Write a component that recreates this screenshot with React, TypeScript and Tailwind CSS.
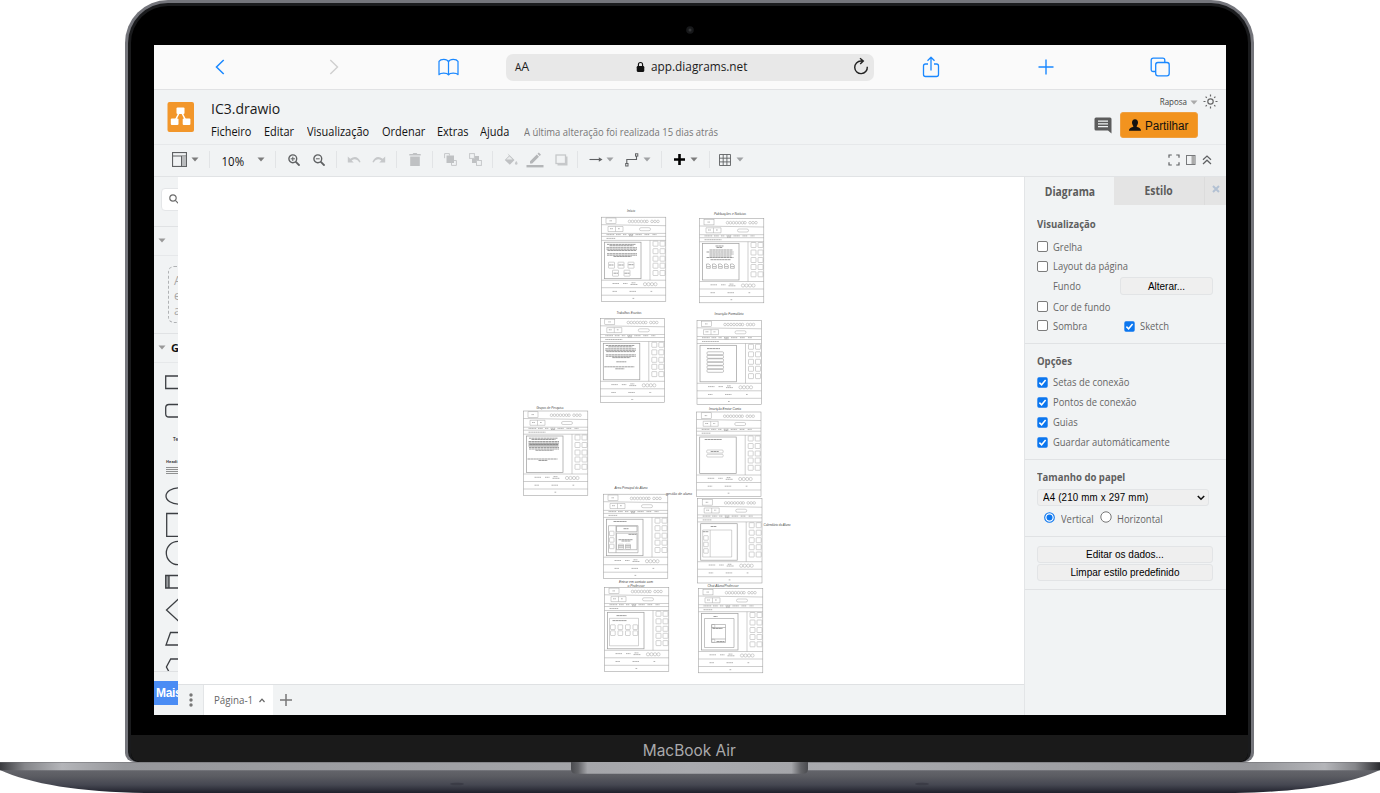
import React from 'react';

type Kids = { children?: React.ReactNode; className?: string };

const Caret = ({ className = 'w-[10px]', color = '#7c7c7c' }: { className?: string; color?: string }) => (
  <span className={'flex shrink-0 justify-center ' + className}>
    <svg width="8" height="5" viewBox="0 0 8 5"><path d="M.5.5h7L4 4.5z" fill={color} /></svg>
  </span>
);

const Sep = () => <span className="h-[17px] w-px shrink-0 bg-[#e2e4e6]" />;

const Cell = ({ children, className = '' }: Kids) => (
  <span className={'flex h-full shrink-0 items-center justify-center ' + className}>{children}</span>
);

function SafariBar() {
  const blue = '#1a88ff';
  return (
    <div className="flex h-[45px] shrink-0 items-center border-b border-[#e1e2e4] bg-[#fafafa] pl-[9px]">
      <Cell className="w-[114px]">
        <svg width="10" height="16" viewBox="0 0 10 16" fill="none" stroke={blue} strokeWidth="1.5"><path d="M8.700 1 1.500 8l7.200 7" /></svg>
      </Cell>
      <Cell className="w-[114px]">
        <svg width="10" height="16" viewBox="0 0 10 16" fill="none" stroke="#cfcfcf" strokeWidth="1.4"><path d="m1.300 1 7.200 7-7.200 7" /></svg>
      </Cell>
      <Cell className="w-[114px] pl-[1px]">
        <svg width="21" height="19" viewBox="0 0 22 20" fill="none" stroke={blue} strokeWidth="1.3">
          <path d="M11 4C10 2 8.200 1.500 6 1.500S2 2 1 3.500v14c1-1.200 3-1.500 5-1.500s4 .3 5 1.800c1-1.500 3-1.800 5-1.800s4 .3 5 1.500v-14c-1-1.500-2.800-2-5-2S12 2 11 4zM11 4v13.800" strokeLinejoin="round" />
        </svg>
      </Cell>
      <div className="ml-[1px] flex h-[27px] w-[368px] shrink-0 items-center rounded-[7px] bg-[#e8e8e8] pl-[7px] pr-[5px]">
        <span className="flex w-[26px] items-baseline pl-[2px] font-['Open_Sans',sans-serif] text-[#1c1c1c]">
          <span className="text-[10px]">A</span><span className="text-[12.5px]">A</span>
        </span>
        <span className="flex flex-1 items-center pl-[97px]">
          <svg width="9" height="12" viewBox="0 0 10 12"><rect x=".8" y="5" width="8.400" height="6.500" rx="1.200" fill="#111" /><path d="M2.700 5.500V3.300a2.300 2.300 0 0 1 4.600 0v2.200" fill="none" stroke="#111" strokeWidth="1.300" /></svg>
          <span className="ml-[6px] origin-left scale-x-[0.945] whitespace-nowrap pt-[1px] font-['Open_Sans',sans-serif] text-[12.5px] text-[#1c1c1c]">app.diagrams.net</span>
        </span>
        <svg className="mb-[2px]" width="16" height="18" viewBox="0 0 16 18" fill="none" stroke="#222" strokeWidth="1.4"><path d="M14.300 9.800A6.300 6.300 0 1 1 8 4h2.300M7 1.200 10.300 4 7.200 7" /></svg>
      </div>
      <Cell className="w-[114px]">
        <svg width="18" height="22" viewBox="0 0 18 22" fill="none" stroke={blue} strokeWidth="1.3" strokeLinejoin="round"><path d="M6 8H3.500Q1.500 8 1.500 10v8.500q0 2 2 2h11q2 0 2-2V10q0-2-2-2H12M9 14.500V1.500M5.500 4.700 9 1.300l3.500 3.400" /></svg>
      </Cell>
      <Cell className="w-[115px]">
        <svg width="16" height="16" viewBox="0 0 16 16" stroke={blue} strokeWidth="1.4"><path d="M8 .5v15M.5 8h15" /></svg>
      </Cell>
      <Cell className="w-[114px]">
        <svg width="20" height="20" viewBox="0 0 20 20" fill="none" stroke={blue} strokeWidth="1.3"><rect x="5.700" y="5.500" width="13.500" height="13.300" rx="2.200" /><path d="M5.500 14.500H3.200q-2 0-2-2V3.200q0-2 2-2h9.600q2 0 2 2v2" /></svg>
      </Cell>
    </div>
  );
}

const MenuItem = ({ children, className = '' }: Kids) => (
  <span className={'shrink-0 whitespace-nowrap ' + className}>
    <span className="inline-block origin-left scale-x-[0.915]">{children}</span>
  </span>
);

function Header() {
  return (
    <div className="flex h-[55px] shrink-0 border-b border-[#e6e8ea] bg-[#f1f3f4] font-['Open_Sans',sans-serif]">
      <svg className="ml-[13px] mt-[12px] shrink-0" width="27" height="30" viewBox="0 0 27 30">
        <rect x=".5" width="26.500" height="30" rx="2" fill="#f2962a" />
        <path d="M13.500 8 7.500 20M13.500 8l6 12" stroke="#fff" strokeWidth="1.600" />
        <g fill="#fff"><rect x="9.500" y="5.500" width="8" height="6.500" rx="1" /><rect x="3.800" y="16.500" width="7.700" height="6.500" rx="1" /><rect x="15.700" y="16.500" width="7.700" height="6.500" rx="1" /></g>
      </svg>
      <div className="ml-[17px] flex w-[640px] shrink-0 flex-col">
        <div className="mt-[9px] h-[20px] origin-left scale-x-[0.965] whitespace-nowrap text-[14.5px] leading-[20px] text-[#1a1a1a]">IC3.drawio</div>
        <div className="mt-[3px] flex h-[20px] items-center text-[12px] leading-[20px] text-[#111]">
          <MenuItem className="w-[53px]">Ficheiro</MenuItem>
          <MenuItem className="w-[43px]">Editar</MenuItem>
          <MenuItem className="w-[75px]">Visualização</MenuItem>
          <MenuItem className="w-[55px]">Ordenar</MenuItem>
          <MenuItem className="w-[43px]">Extras</MenuItem>
          <MenuItem className="w-[44px]">Ajuda</MenuItem>
          <span className="origin-left scale-x-[0.945] whitespace-nowrap text-[10px] text-[#777]">A última alteração foi realizada 15 dias atrás</span>
        </div>
      </div>
      <div className="flex flex-1 flex-col items-end">
        <div className="mt-[4px] flex h-[16px] items-center pr-[8px]">
          <span className="origin-right scale-x-[0.94] text-[8.5px] text-[#444]">Raposa</span>
          <Caret className="ml-[2px] w-[10px]" color="#aaa" />
          <svg className="mb-[1px] ml-[4px]" width="15" height="15" viewBox="0 0 15 15" fill="none" stroke="#666" strokeWidth="1.200"><circle cx="7.500" cy="7.500" r="2.700" /><path d="M7.500.5v2M7.500 12.500v2M.5 7.500h2M12.500 7.500h2M2.600 2.600 3.800 3.800M11.200 11.200l1.200 1.200M2.600 12.400l1.200-1.200M11.200 3.800l1.200-1.200" /></svg>
        </div>
        <div className="mt-[2px] flex items-center pr-[28px]">
          <svg className="mr-[8px]" width="18" height="17" viewBox="0 0 18 17"><path d="M2 .5h14q1.500 0 1.500 1.500v14.500L14 13.500H2Q.5 13.500.5 12V2Q.5.500 2 .5z" fill="#5c5c5c" /><path d="M4 4.200h10M4 6.900h10M4 9.600h10" stroke="#f1f3f4" strokeWidth="1.300" /></svg>
          <div className="flex h-[26px] w-[78px] items-center rounded-[3px] border border-[#f0a040] bg-[#f2931e] pl-[8px]">
            <svg width="12" height="12" viewBox="0 0 12 12"><path d="M6 .3C8 .3 9 1.700 9 3.500S8 6.600 7.500 7.300c0 1 4.500 1 4.500 4.400H0C0 8.300 4.500 8.300 4.500 7.300 4 6.600 3 5.300 3 3.500S4 .3 6 .3z" fill="#111" /></svg>
            <span className="ml-[4px] origin-left scale-x-[0.97] whitespace-nowrap pt-[1px] font-['Liberation_Sans',sans-serif] text-[12px] text-[#111]">Partilhar</span>
          </div>
        </div>
      </div>
    </div>
  );
}

function Toolbar() {
  const g = '#5f6163';
  const d = '#c6c8ca';
  return (
    <div className="flex h-[32px] shrink-0 items-center border-b border-[#e1e3e5] bg-[#f1f3f4] pb-[2px] pl-[16px]">
      <Cell className="w-[19px]">
        <svg width="15" height="15" viewBox="0 0 15 15" fill="none" stroke={g}><rect x=".5" y=".5" width="14" height="14" strokeWidth="1.2" /><path d="M.5 4h14M9.500 4v10.500" /><rect x="10" y="4.500" width="4" height="9.500" fill="#b9bbbd" stroke="none" /></svg>
      </Cell>
      <Caret className="w-[12px]" /><span className="w-[8px]" /><Sep />
      <Cell className="w-[46px]"><span className="inline-block scale-x-[0.95] pt-[4px] font-['Open_Sans',sans-serif] text-[12px] text-[#111]">10%</span></Cell>
      <Caret className="w-[10px]" /><span className="w-[9px]" /><Sep />
      <Cell className="ml-[6px] w-[24px]">
        <svg width="12" height="12" viewBox="0 0 12 12" fill="none" stroke={g} strokeWidth="1.400"><circle cx="4.800" cy="4.800" r="3.900" /><path d="m7.600 7.600 4 4" strokeWidth="1.900" /><path d="M4.800 2.700V7M2.700 4.800H7" strokeWidth="1" /></svg>
      </Cell>
      <Cell className="w-[25px]">
        <svg width="12" height="12" viewBox="0 0 12 12" fill="none" stroke={g} strokeWidth="1.400"><circle cx="4.800" cy="4.800" r="3.900" /><path d="m7.600 7.600 4 4" strokeWidth="1.900" /><path d="M2.900 4.800h3.800" strokeWidth="1" /></svg>
      </Cell>
      <span className="w-[5px]" /><Sep />
      <Cell className="ml-[4px] w-[25px]">
        <svg width="14" height="8" viewBox="0 0 14 8"><path d="M.8.500v6h6L4.600 4.500Q9 1 12.500 6.500L13.600 6Q10 -1.800 3.200 2.800z" fill={d} /></svg>
      </Cell>
      <Cell className="w-[26px]">
        <svg width="14" height="8" viewBox="0 0 14 8"><path d="M13.200.5v6h-6l2.200-2Q5 1 1.500 6.500L.4 6Q4-1.800 10.800 2.800z" fill={d} /></svg>
      </Cell>
      <span className="w-[4px]" /><Sep />
      <Cell className="w-[35px]">
        <svg width="12" height="13" viewBox="0 0 12 13" fill="#bfc1c3"><path d="M.3.900h3.300L4.400 0h3.200l.8.900h3.300v1.700H.3zM1.200 3.600h9.600V13H1.200z" /></svg>
      </Cell>
      <Sep />
      <Cell className="ml-[5px] w-[24px]">
        <svg width="13" height="13" viewBox="0 0 13 13" fill="none" stroke={d}><path d="M.6 5.200V.6h4.800v2M12.400 7.500v4.900H7.500V9M10 7.500h2.400" /><rect x="2.500" y="2.500" width="7.500" height="7.500" fill="#bfc1c3" stroke="none" /></svg>
      </Cell>
      <Cell className="w-[26px]">
        <svg width="13" height="13" viewBox="0 0 13 13" fill="none" stroke={d}><rect x="3" y="3" width="7" height="7" fill="#bfc1c3" stroke="none" /><rect x=".6" y=".6" width="4.800" height="4.800" fill="#f1f3f4" /><rect x="7.500" y="7.500" width="4.900" height="4.900" fill="#f1f3f4" /></svg>
      </Cell>
      <span className="w-[4px]" /><Sep />
      <Cell className="ml-[6px] w-[24px]">
        <svg width="14" height="13" viewBox="0 0 14 13"><path d="M3.500.3 10.500 7 5.800 11.800.8 7 5 2.700z" fill="#bfc1c3" /><path d="M2.200 6.500 5.500 3.300 8.600 6.500z" fill="#e9ebec" /><path d="M12.300 8c.9 1.300 1.300 2 1.300 2.700a1.400 1.400 0 0 1-2.700 0c0-.7.500-1.400 1.400-2.700z" fill={d} /></svg>
      </Cell>
      <Cell className="w-[24px]">
        <svg width="18" height="16" viewBox="0 0 18 16" fill="#b4b6b8"><path d="M4 9.300 10.800 2.500l2.200 2.200L6.200 11.500H4zM11.500 1.800 12.800.5 15 2.700 13.700 4z" /><rect x=".5" y="13" width="17" height="2.400" /></svg>
      </Cell>
      <Cell className="ml-[1px] w-[26px]">
        <svg width="13" height="12" viewBox="0 0 13 12"><path d="M2.500 2.500h10v9h-10z" fill={d} /><rect x="1" y="1" width="9.500" height="8.500" fill="#f1f3f4" stroke={d} strokeWidth="1.300" /></svg>
      </Cell>
      <span className="w-[3px]" /><Sep />
      <Cell className="ml-[9px] w-[18px]">
        <svg width="14" height="7" viewBox="0 0 14 7"><path d="M.5 3.500h11" stroke={g} strokeWidth="1.100" /><path d="m9.800 1.200 3.700 2.300-3.700 2.300z" fill={g} /></svg>
      </Cell>
      <Caret className="w-[10px]" color="#a0a2a4" />
      <Cell className="ml-[9px] w-[16px]">
        <svg width="14" height="14" viewBox="0 0 14 14" fill="none" stroke={g}><path d="M1.800 10.500V6.500h9.700V3" strokeWidth="1.100" /><rect x=".7" y="10.500" width="2.300" height="2.500" /><rect x="10.500" y=".8" width="2.300" height="2.300" /></svg>
      </Cell>
      <Caret className="ml-[2px] w-[10px]" color="#a0a2a4" />
      <span className="w-[9px]" /><Sep />
      <Cell className="ml-[9px] w-[16px]">
        <svg width="11" height="11" viewBox="0 0 11 11" stroke="#000" strokeWidth="2.600"><path d="M5.500 0v11M0 5.500h11" /></svg>
      </Cell>
      <Caret className="ml-[2px] w-[10px]" />
      <span className="w-[10px]" /><Sep />
      <Cell className="ml-[7px] w-[16px]">
        <svg width="12" height="12" viewBox="0 0 12 12" fill="none" stroke={g}><path d="M.5.500h11v11H.5zM4.200.5v11M7.900.5v11M.5 4.200h11M.5 7.900h11" strokeWidth=".9" /></svg>
      </Cell>
      <Caret className="ml-[2px] w-[10px]" color="#a0a2a4" />
      <div className="ml-auto flex items-center pr-[14px]">
        <svg width="12" height="12" viewBox="0 0 12 12" fill="none" stroke={g} strokeWidth="1.200"><path d="M1 3.800V1h2.800M8.200 1H11v2.800M11 8.200V11H8.200M3.800 11H1V8.200" /></svg>
        <svg className="ml-[6px]" width="10" height="10" viewBox="0 0 10 10" fill="none" stroke="#77797b"><rect x=".5" y=".5" width="8.500" height="9" /><rect x="5.500" y="1" width="3" height="8" fill="#aaa" stroke="none" /></svg>
        <svg className="ml-[6px]" width="10" height="10" viewBox="0 0 10 10" fill="none" stroke={g} strokeWidth="1.200"><path d="M1 4.800 5 1l4 3.800M1 9l4-3.800L9 9" /></svg>
      </div>
    </div>
  );
}

function Sidebar() {
  return (
    <div className="flex w-[24px] shrink-0 flex-col overflow-hidden bg-[#f1f3f4] font-['Open_Sans',sans-serif]">
      <div className="flex h-[50px] shrink-0 items-start border-b border-[#e0e2e4] pl-[7px] pt-[11px]">
        <div className="flex h-[23px] w-[60px] shrink-0 items-center rounded-[4px] border border-[#e4e6e8] bg-white pb-[1px] pl-[7px]">
          <svg width="10" height="10" viewBox="0 0 10 10" fill="none" stroke="#6d6d6d" strokeWidth="1.200"><circle cx="4" cy="4" r="3.200" /><path d="m6.300 6.300 3 3" /></svg>
        </div>
      </div>
      <div className="flex h-[29px] shrink-0 items-center border-b border-[#e6e8ea] pb-[2px] pl-[4px]"><Caret className="w-[8px]" color="#999" /></div>
      <div className="h-[78px] shrink-0 border-b border-[#e0e2e4] pl-[14px] pt-[10px]">
        <div className="flex h-[57px] w-[120px] flex-col rounded-[6px] border border-dashed border-[#b0b2b4] pl-[5px] pt-[6px] text-[12px] leading-[15px] text-[#a8a8a8]">
          <span>A</span><span>e</span><span>a</span>
        </div>
      </div>
      <div className="flex h-[29px] shrink-0 items-center border-b border-[#e6e8ea] pl-[4px] text-[11px] font-bold text-[#111]">
        <Caret className="w-[8px] pb-[2px]" color="#999" /><span className="ml-[5px] pt-[1px]">G</span>
      </div>
      <svg className="shrink-0" width="24" height="308" viewBox="154 363 24 308" fill="none" stroke="#3c3f43" strokeWidth="1.300">
        <path d="M180 376h-14.300v12.500H180M180 404.500h-11q-3.300 0-3.300 3.200v6q0 3.300 3.300 3.300h11" />
        <text x="173" y="441" fontSize="4.500" fill="#444" stroke="none" fontFamily="Open Sans" fontWeight="bold">Te</text>
        <text x="166" y="463" fontSize="4" fill="#444" stroke="none" fontFamily="Open Sans" fontWeight="bold">Headi</text>
        <path d="M166 467.500h14M166 469.500h14M166 471.500h14M166 473.500h14" stroke="#777" strokeWidth=".8" />
        <ellipse cx="179" cy="496" rx="13" ry="8.200" />
        <path d="M180 513.500h-13.300v22.800H180" />
        <circle cx="178" cy="553" r="11.700" />
        <rect x="166" y="575.500" width="3" height="12.500" fill="#9a9da0" stroke="none" />
        <path d="M180 575.500h-14.300V588H180M169 575.500V588M179.500 598 166.500 610l13 12M180 632.500h-9.500l-4.500 12.500h14M180 659h-9.300l-4.300 8 4.300 8" />
      </svg>
      <div className="flex h-[44px] shrink-0 flex-col border-t border-[#dfe1e3] pt-[9px]">
        <div className="flex h-[24px] items-center overflow-hidden whitespace-nowrap bg-[#4a8cf4] pl-[2px] font-['Liberation_Sans',sans-serif] text-[12px] font-bold tracking-[-0.3px] text-white">Mais</div>
      </div>
    </div>
  );
}

const tile = (x: number, y: number, s = 5) => <rect key={x + '-' + y} x={x} y={y} width={s} height={s} rx=".5" />;

function Bars({ rows }: { rows: [number, number, number][] }) {
  return <g stroke="#555" strokeWidth=".75" strokeDasharray="2.600 .3" opacity=".75">{rows.map(([x1, x2, y], i) => <path key={i} d={`M${x1} ${y}H${x2}`} />)}</g>;
}

const textBlock: [number, number, number][] = [[5.500, 34, 27.200], [8, 32, 28.500], [5, 35.500, 30.500], [5, 35.500, 32], [6, 35, 33.300], [5.500, 35.500, 36.500], [5.500, 35.500, 38], [12, 30, 39.300]];

function Frame({ x, y, wide, children }: { x: number; y: number; wide?: boolean; children?: React.ReactNode }) {
  return (
    <g transform={`translate(${x} ${y})`} fill="none" stroke="#9c9c9c" strokeWidth=".45">
      <rect x="0" y="0" width="64.300" height="84.300" strokeWidth=".55" />
      <rect x="4.500" y=".8" width="10" height="5.600" />
      {[28, 31, 34, 37, 40, 43, 45.500, 50.500, 53.500, 56.500].map((c) => <circle key={c} cx={c} cy="4.200" r="1.300" />)}
      <path d="M0 7.500 64.300 8.500M0 16.200h64.300M0 19.200h64.300M0 23.200h64.300M48.500 23.200V63M0 63h64.300M0 70.500h64.300M0 78h64.300" strokeWidth=".5" />
      <path d="M6.500 9.300H21.500v5H6.500zM14 9.300v5" />
      <rect x="38" y="10.500" width="11" height="3" rx="1.500" />
      <g stroke="#777" strokeWidth=".55">
        <path d="M8 3.600h2.500M8.500 11.500h3M16.500 11.500h2M5 17.400h8M14.500 17.400h5M21.500 17.400h3.500M27 17.300h5M27.500 18.500h4M34 17.400h6.500M43 17.400h5M51 17.400h4" strokeDasharray="1.300 .3" />
        <path d={wide ? 'M5 21.200h17' : 'M5 21.200h9'} strokeDasharray="1.500 .3" />
        <path d="M11 66.300h6.500M21.500 66.300h4.500M29 67.300h7M30 65.600h4M11 74.200h4.500M28 74.200h6.500M49 74.200h2M31 81.200h2" strokeDasharray="1.500 .3" />
      </g>
      {[43.500, 47, 50.500, 54].map((c) => <circle key={c} cx={c} cy="67" r="1.600" />)}
      {[24, 31.500, 39, 46, 53.300].map((t) => <g key={t}>{tile(51.500, t)}{tile(58.500, t)}</g>)}
      <rect x="3" y="25" width="36.500" height="36.500" strokeWidth=".7" />
      {children}
    </g>
  );
}

const Label = ({ x, y, children, w }: { x: number; y: number; w: number; children: string }) => (
  <text x={x} y={y} textAnchor="middle" textLength={w} lengthAdjust="spacingAndGlyphs" fontSize="3.300" fontStyle="italic" fill="#444" fontFamily="Liberation Sans, sans-serif">{children}</text>
);

function Canvas() {
  return (
    <div className="flex-1 overflow-hidden bg-white">
      <svg width="846" height="507" viewBox="178 177 846 507">
        <Label x={631} y={212} w={8}>Início</Label>
        <Frame x={601.500} y={217.200}>
          <Bars rows={textBlock} />
          {[7, 16.500, 26.500].map((v) => tile(v, 45, 6))}{tile(11, 53, 6)}{tile(22.500, 53, 6)}
          <Bars rows={[[7.500, 12, 47.800], [17, 22, 47.800], [27, 32, 47.500], [12, 16.500, 56], [23, 28, 56]]} />
        </Frame>
        <Label x={730} y={215} w={32}>Publicações e Notícias</Label>
        <Frame x={699.500} y={218.500} wide>
          <Bars rows={[[16, 24, 27.500], [17, 23, 29], [10, 33, 31.500], [7, 34, 33.500], [10, 34, 35.500], [10, 32, 37.500], [7, 34, 39], [11, 31, 41.200]]} />
          {[7, 13, 19, 25, 31].map((v) => <g key={v} stroke="#777"><path d={`M${v} 45.500h2.500l1.300 1.300v3h-3.800z`} /><path d={`M${v + .5} 48h3`} /></g>)}
        </Frame>
        <Label x={629} y={314} w={25}>Trabalhos Escritos</Label>
        <Frame x={600.300} y={318.300} wide>
          <Bars rows={[...textBlock, [16, 26, 43.500], [4, 34, 48.500], [15, 24, 50.500]]} />
        </Frame>
        <Label x={729} y={315} w={29}>Inscrição Formulário</Label>
        <Frame x={697} y={320.300} wide>
          <Bars rows={[[10, 23, 28.300]]} />
          {[31.500, 35, 38.500, 42, 45.500, 49].map((v) => <rect key={v} x="10" y={v} width="16.500" height="3" rx="1" strokeWidth=".6" />)}
        </Frame>
        <Label x={550} y={409} w={27}>Grupos de Pesquisa</Label>
        <Frame x={523.500} y={411} wide>
          <rect x="5" y="32.500" width="30" height="3.200" fill="#bbb" stroke="none" />
          <Bars rows={[...textBlock, [4, 34, 48], [15, 24, 49.500]]} />
        </Frame>
        <Label x={725} y={410} w={32}>Inscrição Enviar Conta</Label>
        <Frame x={696.700} y={412}>
          <Bars rows={[[8, 25, 27.500], [14, 22, 39.500]]} />
          <rect x="10" y="38" width="16.500" height="3" rx="1" /><rect x="10" y="42.300" width="16.500" height="2.700" rx="1" />
        </Frame>
        <Label x={631} y={489} w={33}>Área Principal do Aluno</Label>
        <Label x={679} y={495} w={26}>gestão de aluno</Label>
        <Frame x={603.500} y={494.200}>
          <Bars rows={[[10, 23, 27.300], [20, 25, 34.500], [25, 33, 40.200], [15, 29, 45.500], [18, 27, 46.800]]} />
          <path d="M5 31.500h29.500v27H5zM12.500 31.500v27M13 32h20.500v5.500H13zM13 39h20.500v16.500H13z" strokeWidth=".6" />
          {tile(6, 37, 4.5)}{tile(6, 43.500, 4.5)}{tile(6, 50, 4.5)}{tile(15, 50, 5)}{tile(22, 50, 5)}
          <path d="M15 51.500h5M22 51.500h5M15 53h5M22 53h5" stroke="#555" />
        </Frame>
        <Label x={777} y={526} w={27}>Calendário do Aluno</Label>
        <Frame x={697.700} y={498.700}>
          <Bars rows={[[13, 19, 27.800], [5, 11, 33]]} />
          <path d="M5 31.300h29v27H5zM12.500 31.300v27" />
          {tile(6, 37, 4.500)}{tile(6, 43.500, 4.500)}{tile(6, 50, 4.500)}
        </Frame>
        <Label x={636} y={583} w={34}>Entrar em contato com</Label>
        <Label x={636} y={587} w={17}>o Professor</Label>
        <Frame x={604.500} y={587.300}>
          <Bars rows={[[12, 22, 28.300], [8, 22, 33.300]]} />
          <path d="M5 31h29v27.500H5z" />
          {[6, 13.500, 21, 28.500].map((v) => <g key={v}>{tile(v, 37.500, 4.700)}{tile(v, 43.500, 4.700)}</g>)}
        </Frame>
        <Label x={723} y={587} w={31}>Chat Aluno/Professor</Label>
        <Frame x={698.500} y={588.500}>
          <Bars rows={[[15, 19, 28], [14, 24, 40], [18, 26, 53]]} />
          <path d="M6 30h29.500v29H6zM13 36h14v18H13zM13 39h14M13 50.500h14" strokeWidth=".6" />
          {tile(13.300, 36, 3)}{tile(13.300, 50.800, 3)}
        </Frame>
      </svg>
    </div>
  );
}

const Box = ({ on }: { on?: boolean }) => on ? (
  <svg width="11" height="11" viewBox="0 0 11 11" className="shrink-0"><rect x=".3" y=".3" width="10.400" height="10.400" rx="1.600" fill="#0b76ef" /><path d="m2.400 5.600 2.200 2.200 4-4.800" fill="none" stroke="#fff" strokeWidth="1.500" /></svg>
) : <span className="mb-[1px] h-[11px] w-[11px] shrink-0 rounded-[2px] border border-[#7c7c7c] bg-white" />;

const Slim = ({ children, className = '' }: Kids) => (
  <span className={'inline-block origin-left scale-x-[0.94] whitespace-nowrap ' + className}>{children}</span>
);

const Check = ({ on, children, className = 'h-[20px]' }: Kids & { on?: boolean }) => (
  <div className={'flex shrink-0 items-center gap-[5px] whitespace-nowrap ' + className}><Box on={on} /><Slim>{children}</Slim></div>
);

const Btn = ({ children, className = '' }: Kids) => (
  <div className={"flex items-center justify-center whitespace-nowrap rounded-[3px] border border-[#e2e4e6] bg-[#efefef] font-['Liberation_Sans',sans-serif] text-[10px] text-black " + className}>{children}</div>
);

const Title = ({ children, className = '' }: Kids) => (
  <div className={'flex h-[20px] shrink-0 items-center text-[10.5px] font-bold text-[#5f5f5f] ' + className}>
    <span className="origin-left scale-x-[0.91] whitespace-nowrap">{children}</span>
  </div>
);

function FormatPanel() {
  return (
    <div className="flex w-[202px] shrink-0 flex-col border-l border-[#e3e5e7] bg-[#f1f3f4] font-['Open_Sans',sans-serif] text-[10px] text-[#666]">
      <div className="flex h-[28px] shrink-0 text-[11.5px] font-bold text-[#5c5c5c]">
        <div className="flex w-[89px] items-center justify-center pt-[2px]"><span className="scale-x-[0.9]">Diagrama</span></div>
        <div className="flex w-[90px] items-center justify-center bg-[#e4e4e4]"><span className="scale-x-[0.9]">Estilo</span></div>
        <div className="flex flex-1 items-center justify-center border-l border-[#dcdcdc] bg-[#e4e4e4] pb-[4px]">
          <svg width="8" height="8" viewBox="0 0 8 8" stroke="#b3c1d3" strokeWidth="2"><path d="m1 1 6 6M7 1 1 7" /></svg>
        </div>
      </div>
      <div className="flex h-[139px] shrink-0 flex-col border-b border-[#e0e2e4] pl-[12px]">
        <Title className="mt-[10px]">Visualização</Title>
        <Check className="mt-[2px] h-[20px]">Grelha</Check>
        <Check className="h-[19px]">Layout da página</Check>
        <div className="flex h-[20px] shrink-0 items-center pl-[16px]"><span className="w-[67px]"><Slim>Fundo</Slim></span><Btn className="h-[18px] w-[93px]">Alterar...</Btn></div>
        <Check className="h-[21px] pt-[1px]">Cor de fundo</Check>
        <div className="flex h-[18px] shrink-0 items-center"><Check className="h-[18px] w-[87px]">Sombra</Check><Check on className="h-[18px]">Sketch</Check></div>
      </div>
      <div className="flex h-[116px] shrink-0 flex-col border-b border-[#e0e2e4] pl-[12px]">
        <Title className="mt-[8px]">Opções</Title>
        <Check on>Setas de conexão</Check>
        <Check on>Pontos de conexão</Check>
        <Check on>Guias</Check>
        <Check on>Guardar automáticamente</Check>
      </div>
      <div className="flex h-[77px] shrink-0 flex-col border-b border-[#e0e2e4] pl-[12px]">
        <Title className="mt-[8px]">Tamanho do papel</Title>
        <div className="mt-[1px] flex h-[17px] w-[172px] shrink-0 items-center justify-between rounded-[3px] border border-[#e2e4e6] bg-[#efefef] pl-[5px] pr-[3px] font-['Liberation_Sans',sans-serif] text-black">
          <span className="origin-left scale-x-[0.975] whitespace-nowrap text-[10px] tracking-[0.18px]">A4 (210 mm x 297 mm)</span>
          <svg width="8" height="6" viewBox="0 0 8 6" fill="none" stroke="#111" strokeWidth="1.600"><path d="m.8 1 3.200 3.200L7.200 1" /></svg>
        </div>
        <div className="mt-[4px] flex h-[18px] items-center pl-[7px]">
          <svg width="11" height="11" viewBox="0 0 11 11" className="mb-[4px]"><circle cx="5.500" cy="5.500" r="4.800" fill="#fff" stroke="#0b76ef" strokeWidth="1.100" /><circle cx="5.500" cy="5.500" r="3" fill="#0b76ef" /></svg>
          <span className="ml-[6px] w-[39px] pt-[1px]"><Slim className="scale-x-[0.92]">Vertical</Slim></span>
          <svg width="12" height="12" viewBox="0 0 12 12" className="mb-[4px]"><circle cx="6" cy="6" r="5.200" fill="#fff" stroke="#777" /></svg>
          <span className="ml-[5px] pt-[1px]"><Slim>Horizontal</Slim></span>
        </div>
      </div>
      <div className="flex h-[53px] shrink-0 flex-col gap-[1px] border-b border-[#e0e2e4] pl-[12px] pt-[9px]">
        <Btn className="h-[17px] w-[176px] shrink-0">Editar os dados...</Btn>
        <Btn className="h-[17px] w-[176px] shrink-0">Limpar estilo predefinido</Btn>
      </div>
    </div>
  );
}

function PageBar() {
  return (
    <div className="flex h-[31px] shrink-0 items-stretch border-t border-[#dfe1e3] bg-[#f1f3f4]">
      <div className="flex w-[26px] items-center justify-center border-r border-[#e3e5e7]">
        <svg width="4" height="14" viewBox="0 0 4 14" fill="#777"><circle cx="2" cy="2" r="1.700" /><circle cx="2" cy="7" r="1.700" /><circle cx="2" cy="12" r="1.700" /></svg>
      </div>
      <div className="flex w-[69px] items-center bg-white pl-[10px] font-['Open_Sans',sans-serif] text-[10.5px] text-[#666]">
        <span className="w-[45px] origin-left scale-x-[0.93] whitespace-nowrap pt-[2px]">Página-1</span>
        <svg width="6" height="5" viewBox="0 0 6 5" fill="none" stroke="#666" strokeWidth="1.200"><path d="M.5 4 3 1.200 5.500 4" /></svg>
      </div>
      <div className="flex w-[26px] items-center justify-center"><svg width="12" height="12" viewBox="0 0 12 12" stroke="#777" strokeWidth="1.500"><path d="M6 0v12M0 6h12" /></svg></div>
    </div>
  );
}

function LaptopBase() {
  return (
    <svg className="block shrink-0" width="1380" height="31" viewBox="0 0 1380 31">
      <defs>
        <linearGradient id="body" x1="0" y1="0" x2="0" y2="1"><stop offset="0" stopColor="#64656b" /><stop offset=".25" stopColor="#5c5d63" /><stop offset=".65" stopColor="#454751" /><stop offset="1" stopColor="#1f202b" /></linearGradient>
        <linearGradient id="edge"><stop offset="0" stopColor="#3a3b3f" /><stop offset=".018" stopColor="#85868a" /><stop offset=".045" stopColor="#b4b5b9" /><stop offset=".09" stopColor="#96979b" /><stop offset=".4" stopColor="#a3a4a8" /><stop offset=".6" stopColor="#a9aaae" /><stop offset=".91" stopColor="#96979b" /><stop offset=".96" stopColor="#b4b5b9" /><stop offset=".982" stopColor="#85868a" /><stop offset="1" stopColor="#2c2d31" /></linearGradient>
        <linearGradient id="notch"><stop offset="0" stopColor="#4a4b4f" /><stop offset=".03" stopColor="#626367" /><stop offset=".07" stopColor="#a5a6aa" /><stop offset=".5" stopColor="#a9aaae" /><stop offset=".93" stopColor="#a5a6aa" /><stop offset=".97" stopColor="#626367" /><stop offset="1" stopColor="#4a4b4f" /></linearGradient>
      </defs>
      <path d="M0 8C30 22 80 30 145 31H1235C1300 30 1350 22 1380 8z" fill="url(#body)" />
      <path d="M0 0H1380V8.300H0z" fill="url(#edge)" />
      <path d="M0 0H1380" stroke="#6c6d71" />
      <path d="M571 0H808V7q0 4.700-5 4.700H576q-5 0-5-4.700z" fill="url(#notch)" />
      <ellipse cx="457" cy="22" rx="7" ry="1.300" fill="#3b3c46" /><ellipse cx="922" cy="22" rx="7" ry="1.300" fill="#3b3c46" />
    </svg>
  );
}

export default function App() {
  return (
    <div className="flex h-[793px] w-[1380px] flex-col overflow-hidden bg-white">
      <div className="ml-[125px] flex h-[762px] w-[1129px] shrink-0 rounded-b-[9px] rounded-t-[43px] bg-[#74757b] px-[3px] pt-[3px]">
        <div className="flex flex-1 flex-col rounded-b-[10px] rounded-t-[40px] border-x-[3px] border-t-[3px] border-[#1a1b1d] bg-black">
          <div className="flex h-[39px] shrink-0 items-center justify-center pt-[8px]">
            <svg width="10" height="10" viewBox="0 0 10 10"><circle cx="5" cy="5" r="3.800" fill="#17181a" /><circle cx="5" cy="5" r="1.500" fill="#343638" /></svg>
          </div>
          <div className="ml-[23px] flex h-[670px] w-[1072px] shrink-0 flex-col overflow-hidden bg-[#f1f3f4]">
            <SafariBar />
            <Header />
            <Toolbar />
            <div className="flex min-h-0 flex-1">
              <Sidebar />
              <div className="flex w-[846px] shrink-0 flex-col">
                <Canvas />
                <PageBar />
              </div>
              <FormatPanel />
            </div>
          </div>
          <div className="mt-[20px] flex h-[27px] shrink-0 items-center justify-center rounded-b-[9px] bg-[#1a1a1a] pt-[2px] font-['Inter',sans-serif] text-[16px] text-[#a9a9ab]">
            <span className="inline-block scale-x-[0.965] whitespace-nowrap">MacBook Air</span>
          </div>
        </div>
      </div>
      <LaptopBase />
    </div>
  );
}
